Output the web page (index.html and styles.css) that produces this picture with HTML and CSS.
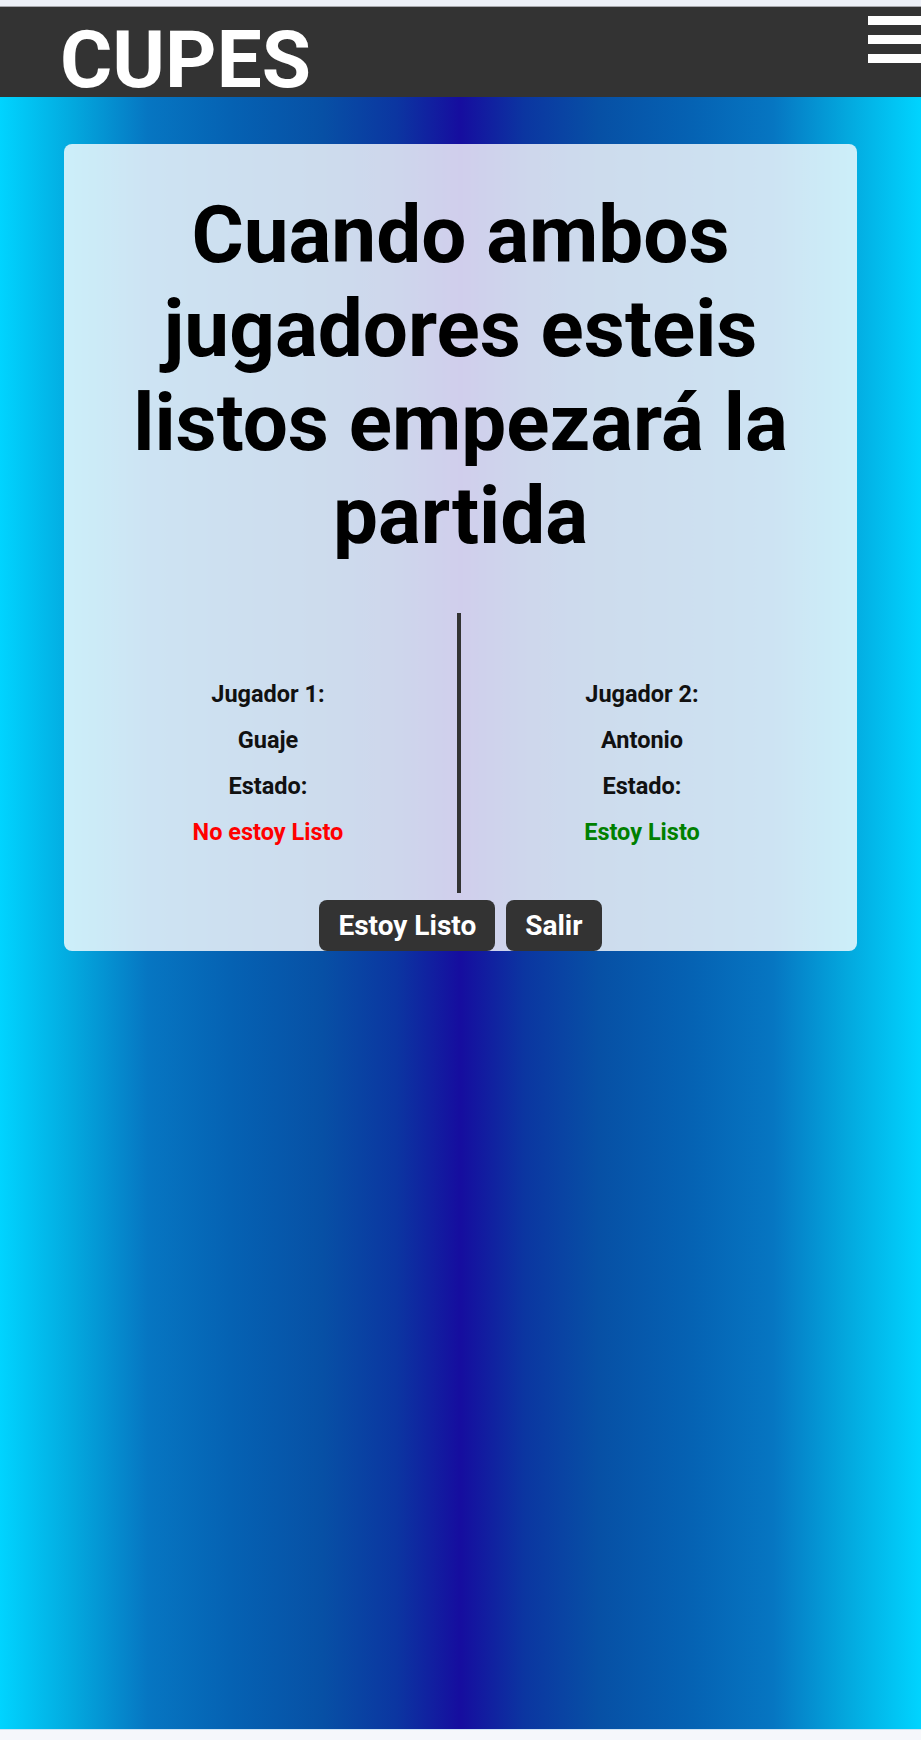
FILE: index.html
```html
<!DOCTYPE html>
<html lang="es">
<head>
<meta charset="utf-8">
<title>CUPES</title>
<link rel="stylesheet" href="styles.css">
</head>
<body>
<div class="statusbar"></div>
<header class="topbar">
  <div class="logo">CUPES</div>
  <div class="burger" aria-label="menu">
    <span></span><span></span><span></span>
  </div>
</header>
<main class="stage">
  <section class="card">
    <h1 class="title">Cuando ambos jugadores esteis listos empezará la partida</h1>
    <div class="players">
      <div class="player">
        <div class="line">Jugador 1:</div>
        <div class="line">Guaje</div>
        <div class="line">Estado:</div>
        <div class="line notready">No estoy Listo</div>
      </div>
      <div class="divider"></div>
      <div class="player">
        <div class="line">Jugador 2:</div>
        <div class="line">Antonio</div>
        <div class="line">Estado:</div>
        <div class="line ready">Estoy Listo</div>
      </div>
    </div>
    <div class="actions">
      <button class="btn">Estoy Listo</button>
      <button class="btn">Salir</button>
    </div>
  </section>
</main>
<div class="navbar"></div>
</body>
</html>
```
FILE: styles.css
```css
html, body {
  margin: 0;
  padding: 0;
}
body {
  width: 921px;
  height: 1740px;
  overflow: hidden;
  background: #f5f7fb;
  font-family: Roboto, "Liberation Sans", Arial, sans-serif;
}
.statusbar {
  height: 6px;
  background: #eef1f8;
  border-bottom: 1px solid #a8a8ad;
}
.topbar {
  height: 90px;
  box-sizing: border-box;
  background: #333333;
  display: flex;
  align-items: flex-start;
}
.logo {
  margin-left: 60px;
  padding-top: 16px;
  font-size: 80px;
  line-height: 74px;
  font-weight: 700;
  color: #ffffff;
}
.burger {
  margin-left: auto;
  padding-top: 9px;
  width: 53px;
  display: flex;
  flex-direction: column;
  gap: 10px;
}
.burger span {
  display: block;
  height: 9px;
  background: #ffffff;
}
.stage {
  height: 1632px;
  padding-top: 47px;
  box-sizing: border-box;
  background: linear-gradient(90deg,
    #00d4ff 0%,
    #03a8de 8%,
    #0676c2 16%,
    #0562b3 25%,
    #0750a5 35%,
    #0b36a1 43%,
    #160d9f 50%,
    #0b36a1 57%,
    #0750a5 65%,
    #0562b3 75%,
    #0676c2 84%,
    #03a8de 92%,
    #00d4ff 100%);
}
.card {
  margin: 0 64px;
  background: rgba(255, 255, 255, 0.8);
  border-radius: 8px;
  padding-top: 45px;
}
.title {
  margin: 0;
  padding: 0 20px;
  font-size: 80px;
  line-height: 93.75px;
  font-weight: 700;
  color: #000000;
  text-align: center;
}
.players {
  margin-top: 49px;
  height: 280px;
  padding-left: 15px;
  display: grid;
  grid-template-columns: 378px 4px 362px;
}
.player {
  padding-top: 20px;
  display: flex;
  flex-direction: column;
  justify-content: center;
  text-align: center;
}
.line {
  font-size: 23.5px;
  line-height: 46px;
  font-weight: 700;
  color: #111111;
}
.line.notready {
  color: #ff0000;
}
.line.ready {
  color: #008000;
}
.divider {
  background: #333333;
}
.actions {
  margin-top: 7px;
  display: flex;
  justify-content: center;
  gap: 11px;
}
.btn {
  height: 51px;
  padding: 0 19px;
  border: none;
  border-radius: 8px;
  background: #333333;
  color: #ffffff;
  font-family: Roboto, "Liberation Sans", Arial, sans-serif;
  font-size: 28px;
  line-height: 51px;
  font-weight: 700;
}
.navbar {
  height: 11px;
  background: #f5f7fb;
  border-top: 1px solid #cfe3f3;
  box-sizing: border-box;
}
```
